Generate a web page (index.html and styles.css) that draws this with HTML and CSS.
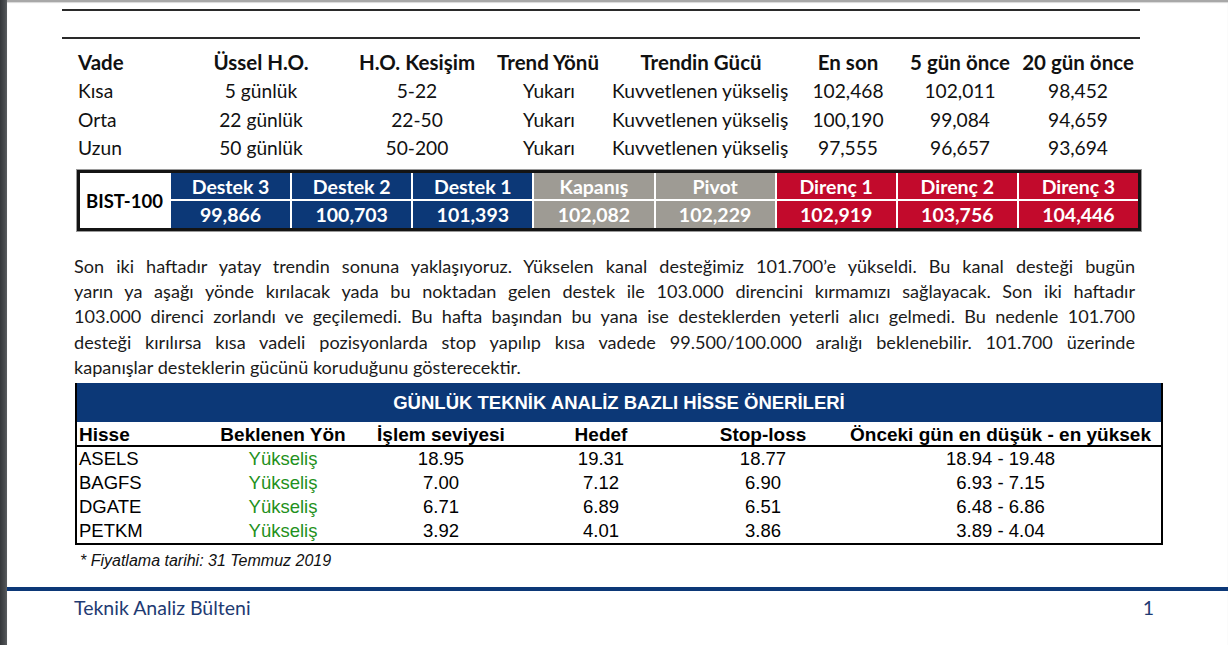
FILE: index.html
```html
<!DOCTYPE html>
<html lang="tr">
<head>
<meta charset="utf-8">
<title>Teknik Analiz Bülteni</title>
<link rel="stylesheet" href="styles.css">
</head>
<body>
<div class="viewer">
  <div class="side-strip"></div>
  <div class="page">
    <div class="rule rule-top"></div>
    <div class="rule rule-second"></div>

    <div class="trend">
      <div class="trow thead">
        <div class="c c1 left">Vade</div>
        <div class="c">Üssel H.O.</div>
        <div class="c">H.O. Kesişim</div>
        <div class="c">Trend Yönü</div>
        <div class="c">Trendin Gücü</div>
        <div class="c">En son</div>
        <div class="c">5 gün önce</div>
        <div class="c">20 gün önce</div>
      </div>
      <div class="trow">
        <div class="c c1 left">Kısa</div>
        <div class="c">5 günlük</div>
        <div class="c">5-22</div>
        <div class="c yon">Yukarı</div>
        <div class="c guc">Kuvvetlenen yükseliş</div>
        <div class="c">102,468</div>
        <div class="c">102,011</div>
        <div class="c">98,452</div>
      </div>
      <div class="trow">
        <div class="c c1 left">Orta</div>
        <div class="c">22 günlük</div>
        <div class="c">22-50</div>
        <div class="c yon">Yukarı</div>
        <div class="c guc">Kuvvetlenen yükseliş</div>
        <div class="c">100,190</div>
        <div class="c">99,084</div>
        <div class="c">94,659</div>
      </div>
      <div class="trow">
        <div class="c c1 left">Uzun</div>
        <div class="c">50 günlük</div>
        <div class="c">50-200</div>
        <div class="c yon">Yukarı</div>
        <div class="c guc">Kuvvetlenen yükseliş</div>
        <div class="c">97,555</div>
        <div class="c">96,657</div>
        <div class="c">93,694</div>
      </div>
    </div>

    <div class="levels">
      <div class="lv-name">BIST-100</div>
      <div class="lv navy">Destek 3</div>
      <div class="lv navy">Destek 2</div>
      <div class="lv navy">Destek 1</div>
      <div class="lv gray">Kapanış</div>
      <div class="lv gray">Pivot</div>
      <div class="lv red">Direnç 1</div>
      <div class="lv red">Direnç 2</div>
      <div class="lv red">Direnç 3</div>
      <div class="lv navy">99,866</div>
      <div class="lv navy">100,703</div>
      <div class="lv navy">101,393</div>
      <div class="lv gray">102,082</div>
      <div class="lv gray">102,229</div>
      <div class="lv red">102,919</div>
      <div class="lv red">103,756</div>
      <div class="lv red">104,446</div>
    </div>

    <div class="para">
      <div class="pl">Son iki haftadır yatay trendin sonuna yaklaşıyoruz. Yükselen kanal desteğimiz 101.700’e yükseldi. Bu kanal desteği bugün</div>
      <div class="pl">yarın ya aşağı yönde kırılacak yada bu noktadan gelen destek ile 103.000 direncini kırmamızı sağlayacak. Son iki haftadır</div>
      <div class="pl">103.000 direnci zorlandı ve geçilemedi. Bu hafta başından bu yana ise desteklerden yeterli alıcı gelmedi. Bu nedenle 101.700</div>
      <div class="pl">desteği kırılırsa kısa vadeli pozisyonlarda stop yapılıp kısa vadede 99.500/100.000 aralığı beklenebilir. 101.700 üzerinde</div>
      <div class="pl last">kapanışlar desteklerin gücünü koruduğunu gösterecektir.</div>
    </div>

    <div class="picks">
      <div class="picks-title">GÜNLÜK TEKNİK ANALİZ BAZLI HİSSE ÖNERİLERİ</div>
      <div class="prow phead">
        <div class="p left">Hisse</div>
        <div class="p">Beklenen Yön</div>
        <div class="p">İşlem seviyesi</div>
        <div class="p">Hedef</div>
        <div class="p">Stop-loss</div>
        <div class="p">Önceki gün en düşük - en yüksek</div>
      </div>
      <div class="prow">
        <div class="p left">ASELS</div>
        <div class="p up">Yükseliş</div>
        <div class="p">18.95</div>
        <div class="p">19.31</div>
        <div class="p">18.77</div>
        <div class="p">18.94 - 19.48</div>
      </div>
      <div class="prow">
        <div class="p left">BAGFS</div>
        <div class="p up">Yükseliş</div>
        <div class="p">7.00</div>
        <div class="p">7.12</div>
        <div class="p">6.90</div>
        <div class="p">6.93 - 7.15</div>
      </div>
      <div class="prow">
        <div class="p left">DGATE</div>
        <div class="p up">Yükseliş</div>
        <div class="p">6.71</div>
        <div class="p">6.89</div>
        <div class="p">6.51</div>
        <div class="p">6.48 - 6.86</div>
      </div>
      <div class="prow">
        <div class="p left">PETKM</div>
        <div class="p up">Yükseliş</div>
        <div class="p">3.92</div>
        <div class="p">4.01</div>
        <div class="p">3.86</div>
        <div class="p">3.89 - 4.04</div>
      </div>
    </div>

    <div class="note">* Fiyatlama tarihi: 31 Temmuz 2019</div>

    <div class="footer">
      <span class="f-title">Teknik Analiz Bülteni</span>
      <span class="f-num">1</span>
    </div>
  </div>
</div>
</body>
</html>
```

FILE: styles.css
```css
html, body {
  margin: 0;
  padding: 0;
  background: #ffffff;
}

.viewer {
  display: flex;
  width: 1228px;
  height: 645px;
  overflow: hidden;
}

.side-strip {
  width: 7px;
  flex: none;
  background: linear-gradient(to right, #34373a, #4a4d50 70%, #5c5f62);
}

.page {
  flex: 1;
  display: flex;
  flex-direction: column;
  background: #ffffff;
  border-top: 2px solid #a8a8a8;
  box-shadow: inset 0 1px 1px #d8d8d8;
  font-family: Lato, "Open Sans", sans-serif;
  color: #111;
}

.rule {
  height: 2px;
  background: #2a2a2a;
  margin-left: 55px;
  width: 1078px;
}
.rule-top { margin-top: 7px; }
.rule-second { margin-top: 26px; }

/* Trend table */
.trend {
  margin-top: 8px;
  margin-left: 68px;
}
.trow {
  display: grid;
  grid-template-columns: 115px 142px 170px 92px 214px 80px 144px 92px;
  height: 28.7px;
  align-items: center;
  font-size: 19.2px;
}
.thead { font-weight: 700; font-size: 20.5px; height: 29px; }
.c {
  display: flex;
  justify-content: center;
  white-space: nowrap;
}
.c.left { justify-content: flex-start; padding-left: 3px; }
.trow:not(.thead) .c.yon { justify-content: flex-end; padding-right: 19px; }
.trow:not(.thead) .c.guc { justify-content: flex-start; padding-left: 18px; }

/* Levels table */
.levels {
  margin-top: 8px;
  margin-left: 70px;
  width: 1058px;
  display: grid;
  grid-template-columns: 89px repeat(8, 1fr);
  grid-template-rows: 26px 27px;
  column-gap: 2px;
  row-gap: 2px;
  background: #ffffff;
  border: 3px solid #141414;
  box-shadow: 0 0 0 1px #9a9a9a;
  font-weight: 700;
  font-size: 19.5px;
}
.lv-name {
  grid-row: 1 / span 2;
  display: flex;
  align-items: center;
  justify-content: center;
  color: #000;
  background: #fff;
  font-size: 18.5px;
}
.lv {
  display: flex;
  align-items: center;
  justify-content: center;
  color: #ffffff;
}
.navy { background: #0c3877; }
.gray { background: #9e9b94; }
.red  { background: #c20a2c; }

/* Paragraph */
.para {
  margin-top: 23px;
  margin-left: 67px;
  width: 1061px;
  font-size: 18.1px;
  line-height: 25.2px;
  color: #1a1a1a;
}
.pl {
  text-align: justify;
  text-align-last: justify;
  white-space: nowrap;
}
.pl.last { text-align-last: left; }

/* Picks table */
.picks {
  margin-top: 3px;
  margin-left: 68px;
  width: 1084px;
  border: 2px solid #000;
  border-top: none;
  font-family: "Liberation Sans", Arial, sans-serif;
  color: #000;
}
.picks-title {
  height: 39px;
  background: #0c3877;
  color: #fff;
  font-weight: 700;
  font-size: 18.5px;
  display: flex;
  align-items: center;
  justify-content: center;
}
.prow {
  display: grid;
  grid-template-columns: 123px 166px 150px 170px 154px 1fr;
  height: 24px;
  align-items: center;
  font-size: 18.5px;
}
.phead {
  font-weight: 700;
  font-size: 19px;
  height: 25px;
  box-sizing: border-box;
  border-bottom: 2px solid #000;
  padding-top: 2px;
}
.p {
  display: flex;
  justify-content: center;
  white-space: nowrap;
}
.p.left { justify-content: flex-start; padding-left: 2px; }
.p.up { color: #1f9120; }

.note {
  margin-top: 7px;
  margin-left: 73px;
  font-family: "Liberation Sans", Arial, sans-serif;
  font-style: italic;
  font-size: 16px;
  color: #111;
}

.footer {
  margin-top: 17px;
  border-top: 4px solid #0c3877;
  display: flex;
  justify-content: space-between;
  align-items: center;
  padding: 5px 74px 0 67px;
  width: 1221px;
  box-sizing: border-box;
  font-family: Lato, "Open Sans", sans-serif;
  font-size: 19.5px;
  color: #1f3b73;
}
```
